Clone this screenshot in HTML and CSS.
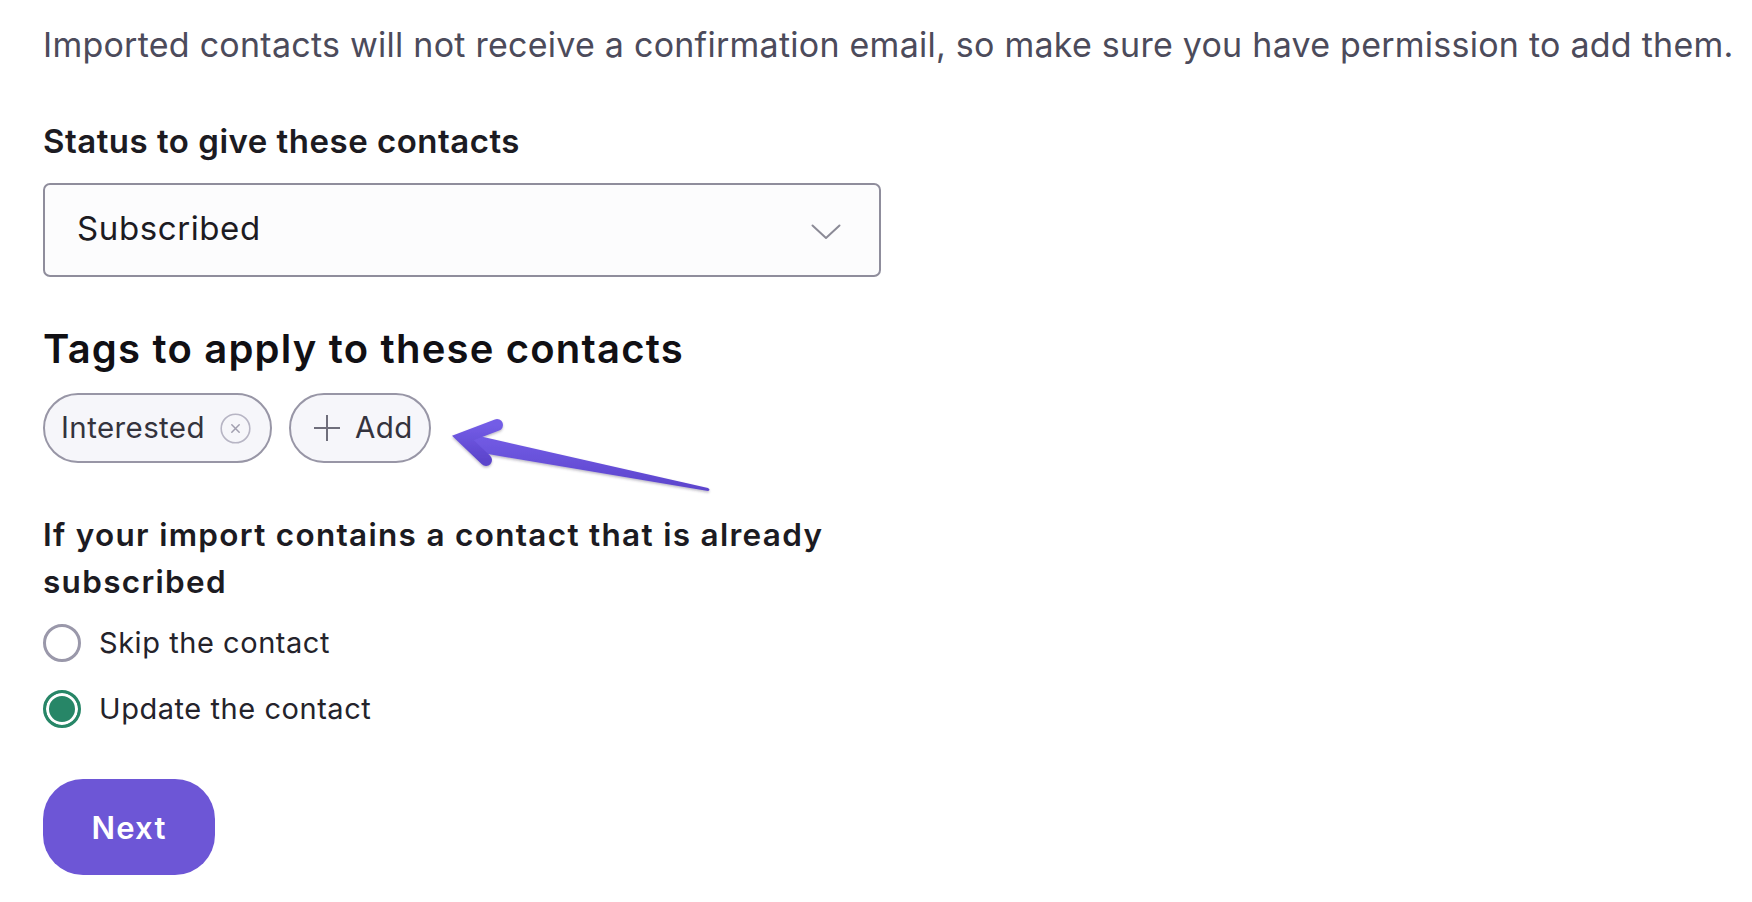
FILE: index.html
```html
<!DOCTYPE html>
<html lang="en">
<head>
<meta charset="utf-8">
<title>Import contacts</title>
<link rel="stylesheet" href="styles.css">
</head>
<body>
<main class="page">
  <p class="intro">Imported contacts will not receive a confirmation email, so make sure you have permission to add them.</p>

  <section class="form">
    <label class="label">Status to give these contacts</label>
    <div class="select" role="combobox" aria-expanded="false">
      <span class="select-value">Subscribed</span>
      <svg class="chevron" width="30" height="16" viewBox="0 0 30 16" aria-hidden="true">
        <polyline points="1.5,1.5 15,14 28.5,1.5" fill="none" stroke="#8b8a96" stroke-width="2" stroke-linecap="round" stroke-linejoin="round"/>
      </svg>
    </div>

    <h2 class="heading">Tags to apply to these contacts</h2>
    <div class="tags">
      <span class="chip">
        <span class="chip-text">Interested</span>
        <span class="chip-close" aria-label="Remove">
          <svg width="31" height="31" viewBox="0 0 31 31" aria-hidden="true">
            <circle cx="15.5" cy="15.5" r="14.3" fill="none" stroke="#b7b5c4" stroke-width="1.6"/>
            <path d="M11.8 11.8 L19.2 19.2 M19.2 11.8 L11.8 19.2" stroke="#a19faf" stroke-width="1.5" stroke-linecap="round"/>
          </svg>
        </span>
      </span>
      <button class="chip chip-add" type="button">
        <svg class="plus" width="28" height="28" viewBox="0 0 28 28" aria-hidden="true">
          <path d="M14 1 V27 M1 14 H27" stroke="#6f6e7b" stroke-width="2"/>
        </svg>
        <span class="chip-text">Add</span>
      </button>
    </div>

    <h3 class="question">If your import contains a contact that is already subscribed</h3>
    <div class="radios">
      <label class="radio-row">
        <input class="radio" type="radio" name="dup">
        <span class="radio-text">Skip the contact</span>
      </label>
      <label class="radio-row">
        <input class="radio" type="radio" name="dup" checked>
        <span class="radio-text">Update the contact</span>
      </label>
    </div>

    <button class="next" type="button">Next</button>
  </section>

  <svg class="arrow" width="280" height="95" viewBox="440 405 280 95" aria-hidden="true">
    <defs>
      <linearGradient id="ag" x1="0" y1="0" x2="0" y2="1">
        <stop offset="0" stop-color="#735de6"/>
        <stop offset="1" stop-color="#5c44cc"/>
      </linearGradient>
      <filter id="sh" x="-10%" y="-20%" width="120%" height="160%">
        <feDropShadow dx="0" dy="1.5" stdDeviation="1" flood-color="#3a3050" flood-opacity="0.35"/>
      </filter>
    </defs>
    <g filter="url(#sh)" fill="url(#ag)">
      <path d="M466 433 L708 488 Q711 490 708 491 L482 453 Z"/>
      <polyline points="497,425 463,438 486,460" fill="none" stroke="url(#ag)" stroke-width="12" stroke-linecap="round" stroke-linejoin="miter" stroke-miterlimit="6"/>
    </g>
  </svg>
</main>
</body>
</html>
```

FILE: styles.css
```css
* {
  box-sizing: border-box;
}

html, body {
  margin: 0;
  padding: 0;
  background: #ffffff;
}

body {
  font-family: "Inter", "Noto Sans", sans-serif;
  color: #1c1b22;
}

.page {
  position: relative;
  padding: 22px 0 0 43px;
  min-height: 902px;
}

.intro {
  margin: 0;
  font-size: 34px;
  line-height: 46px;
  font-weight: 400;
  letter-spacing: 0.25px;
  color: #4c4b5b;
  white-space: nowrap;
}

.form {
  width: 838px;
  display: flex;
  flex-direction: column;
  align-items: flex-start;
}

.label {
  display: block;
  margin-top: 51px;
  font-size: 33px;
  line-height: 44px;
  font-weight: 600;
  letter-spacing: 0.5px;
  color: #1c1b22;
}

.select {
  margin-top: 20px;
  width: 838px;
  height: 94px;
  border: 2px solid #8f8d9c;
  border-radius: 7px;
  background: #fcfcfd;
  display: flex;
  align-items: center;
  justify-content: space-between;
  padding: 0 38px 0 32px;
}

.select-value {
  font-size: 33px;
  line-height: 44px;
  letter-spacing: 0.6px;
  padding-bottom: 4px;
  color: #1c1b22;
}

.chevron {
  display: block;
  margin-top: 4px;
}

.heading {
  margin: 47px 0 0;
  font-size: 40px;
  line-height: 50px;
  font-weight: 600;
  letter-spacing: 1.2px;
  color: #111014;
}

.tags {
  margin-top: 19px;
  display: flex;
  gap: 17px;
}

.chip {
  height: 70px;
  border: 2px solid #9896a6;
  border-radius: 35px;
  background: #f6f6fa;
  display: flex;
  align-items: center;
  padding: 0 19px 0 16px;
  font-family: inherit;
  font-size: 29.5px;
  letter-spacing: 0.4px;
  color: #34333d;
  gap: 15px;
}

.chip-add {
  padding: 0 16px 0 22px;
  gap: 14px;
  cursor: pointer;
}

.chip-text {
  line-height: 40px;
  padding-bottom: 2px;
}

.chip-close,
.plus {
  display: block;
}

.chip-close svg {
  display: block;
}

.question {
  margin: 48px 0 0;
  font-size: 31.5px;
  line-height: 47px;
  font-weight: 600;
  letter-spacing: 1.3px;
  color: #1c1b22;
}

.radios {
  margin-top: 18px;
  display: flex;
  flex-direction: column;
  gap: 27px;
}

.radio-row {
  display: flex;
  align-items: center;
  gap: 18px;
  height: 39px;
  cursor: pointer;
}

.radio {
  appearance: none;
  -webkit-appearance: none;
  margin: 0;
  width: 38px;
  height: 38px;
  border-radius: 50%;
  border: 3px solid #9a98aa;
  background: #ffffff;
}

.radio:checked {
  border-color: #278667;
  background: #278667;
  box-shadow: inset 0 0 0 3px #ffffff;
}

.radio-text {
  font-size: 29px;
  line-height: 39px;
  letter-spacing: 0.55px;
  color: #24232b;
}

.next {
  margin-top: 51px;
  width: 172px;
  height: 96px;
  border: none;
  border-radius: 40px;
  background: #6d56d6;
  color: #ffffff;
  font-family: inherit;
  font-size: 31px;
  font-weight: 600;
  letter-spacing: 1.2px;
  cursor: pointer;
}

.arrow {
  position: absolute;
  left: 440px;
  top: 405px;
}
```
